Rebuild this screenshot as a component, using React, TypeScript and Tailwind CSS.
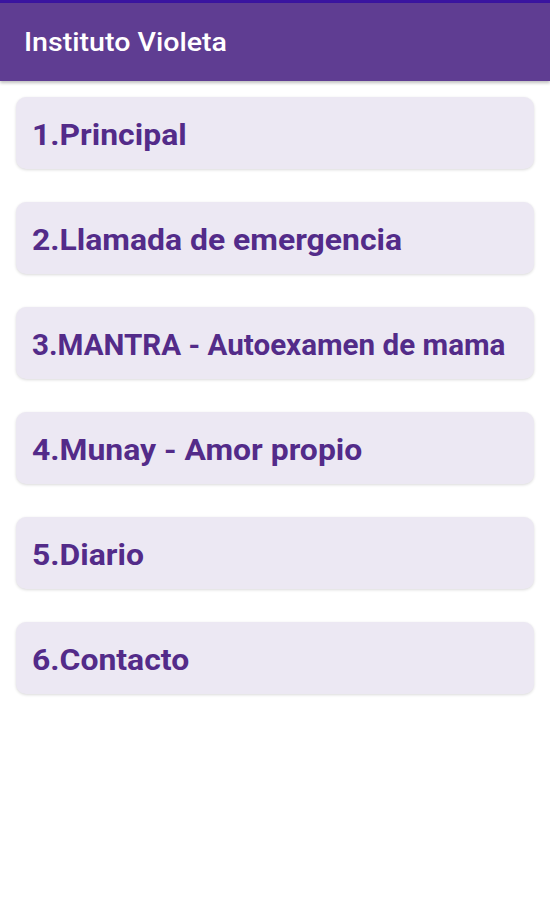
import React from 'react'

// The reference is a phone screenshot squeezed vertically, so the text runs a bit wider.
const items = [
  { label: '1.Principal', stretch: 'scale-x-[1.1]' },
  { label: '2.Llamada de emergencia', stretch: 'scale-x-[1.1]' },
  { label: '3.MANTRA - Autoexamen de mama', stretch: 'scale-x-[1.02]' },
  { label: '4.Munay - Amor propio', stretch: 'scale-x-[1.1]' },
  { label: '5.Diario', stretch: 'scale-x-[1.1]' },
  { label: '6.Contacto', stretch: 'scale-x-[1.1]' },
]

export default function App() {
  return (
    <div className="w-[550px] h-[900px] bg-white font-['Roboto',sans-serif]">
      <div className="h-[3px] bg-[#3a14a0]" />
      <div className="h-[78px] bg-[#5f3d92] flex items-center px-6 shadow-[0_2px_3px_rgba(0,0,0,0.25)]">
        <h1 className="text-white text-[26px] font-medium origin-left scale-x-[1.1] whitespace-nowrap">
          Instituto Violeta
        </h1>
      </div>
      <div className="flex flex-col gap-[33px] px-4 pt-4">
        {items.map((item) => (
          <div
            key={item.label}
            className="h-[72px] rounded-[10px] bg-[#ece8f3] flex items-center px-4 pt-[6px] shadow-[0_1px_3px_rgba(0,0,0,0.15)]"
          >
            <span
              className={`text-[#532b89] text-[29px] font-bold whitespace-nowrap origin-left ${item.stretch}`}
            >
              {item.label}
            </span>
          </div>
        ))}
      </div>
    </div>
  )
}
